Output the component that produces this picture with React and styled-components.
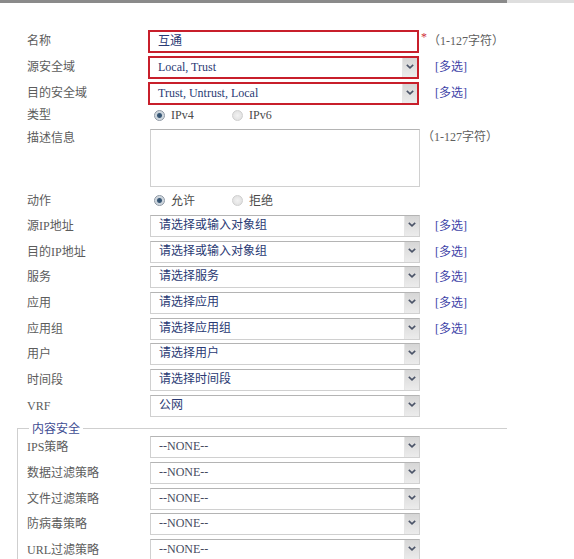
import React from "react";
import styled, { createGlobalStyle, css } from "styled-components";

const Global = createGlobalStyle`
  html, body { margin: 0; padding: 0; background: #fff; }
  body {
    font-family: "Liberation Serif", "Noto Sans CJK SC", serif;
    font-size: 12px;
    color: #5a5a5a;
  }
`;

const Page = styled.div`
  width: 574px;
  height: 559px;
  overflow: hidden;
  background: #fff;
`;

const TopBar = styled.div`
  height: 3px;
  background: linear-gradient(to right, #8a8a8a 507px, #dedede 507px);
`;

const Form = styled.div`
  padding: 25px 0 0 17px;
`;

const Section = styled.div`
  padding-left: 10px;
`;

const Row = styled.div`
  display: grid;
  grid-template-columns: 123px 270px 1fr;
  align-items: ${(p) => (p.$top ? "start" : "center")};
  height: ${(p) => p.$h || "25.7px"};
  box-sizing: border-box;
  padding-top: ${(p) => p.$pt || "0"};
`;

const Label = styled.div`
  color: #5c5c5c;
  line-height: 16px;
  white-space: nowrap;
  ${(p) =>
    p.$top &&
    css`
      padding-top: 1px;
    `}
`;

const Box = styled.div`
  display: flex;
  box-sizing: border-box;
  height: 22px;
  width: 270px;
  border: 1px solid #d0d0d0;
  border-top-color: #b4b4b4;
  background: #fff;
  ${(p) =>
    p.$red &&
    css`
      height: 23px;
      width: 271px;
      margin-left: -2px;
      border: 2px solid #c81f2b;
    `}
`;

const BoxText = styled.div`
  flex: 1;
  padding-left: 8px;
  line-height: 19px;
  color: ${(p) => (p.$muted ? "#454a5e" : "#2a3a74")};
  white-space: nowrap;
  overflow: hidden;
`;

const ArrowBtn = styled.div`
  width: 15px;
  display: flex;
  justify-content: center;
  padding-top: 6px;
  box-sizing: border-box;
  background: linear-gradient(#d6d6d6, #ececec);
  border-left: 1px solid #e6e6e6;
`;

const Extra = styled.div`
  display: flex;
  align-items: flex-start;
  white-space: nowrap;
  line-height: 16px;
`;

const Multi = styled.span`
  margin-left: 15px;
  color: #4044a8;
`;

const Star = styled.span`
  color: #d0303a;
  margin-left: 1px;
  font-size: 12px;
  line-height: 12px;
  margin-top: -2px;
`;

const Hint = styled.span`
  color: #606060;
  margin-left: ${(p) => p.$ml || "0"};
`;

const TextArea = styled.div`
  box-sizing: border-box;
  width: 270px;
  height: 58px;
  border: 1px solid #d0d0d0;
  border-top-color: #b4b4b4;
`;

const RadioGroup = styled.div`
  display: flex;
  align-items: center;
  padding-left: 4px;
`;

const Option = styled.label`
  display: flex;
  align-items: center;
  width: 78px;
  color: #4a4a4a;
  line-height: 14px;
`;

const RadioDot = styled.span`
  box-sizing: border-box;
  width: 11px;
  height: 11px;
  border-radius: 50%;
  margin-right: 6px;
  border: 1px solid ${(p) => (p.$on ? "#8d97a3" : "#cfcfcf")};
  background: ${(p) =>
    p.$on
      ? "radial-gradient(circle, #2f4d6b 0, #3b5a78 2px, #c9d2da 3px, #e6ebef 100%)"
      : "radial-gradient(circle, #f2f2f2 0, #dcdcdc 100%)"};
`;

const Fieldset = styled.fieldset`
  margin: 2px 0 0 0;
  width: 490px;
  box-sizing: border-box;
  padding: 0 0 0 9px;
  border: none;
  border-top: 1px solid #cfcfcf;
  border-left: 1px solid #cfcfcf;
`;

const Legend = styled.legend`
  padding: 0 3px;
  margin-left: 2px;
  margin-bottom: -2px;
  line-height: 16px;
  color: #3e4c92;
`;

function Chevron() {
  return (
    <svg width="8" height="5" viewBox="0 0 8 5">
      <path d="M0.8 0.8 L4 3.8 L7.2 0.8" fill="none" stroke="#4b5468" strokeWidth="1.6" />
    </svg>
  );
}

function Select({ value, red, muted }) {
  return (
    <Box $red={red}>
      <BoxText $muted={muted}>{value}</BoxText>
      <ArrowBtn>
        <Chevron />
      </ArrowBtn>
    </Box>
  );
}

function Radio({ options, checked }) {
  return (
    <RadioGroup>
      {options.map((o, i) => (
        <Option key={o}>
          <RadioDot $on={i === checked} />
          {o}
        </Option>
      ))}
    </RadioGroup>
  );
}

const selectRows = [
  ["源IP地址", "请选择或输入对象组", true],
  ["目的IP地址", "请选择或输入对象组", true],
  ["服务", "请选择服务", true],
  ["应用", "请选择应用", true],
  ["应用组", "请选择应用组", true],
  ["用户", "请选择用户", false],
  ["时间段", "请选择时间段", false],
  ["VRF", "公网", false],
];

const policyRows = ["IPS策略", "数据过滤策略", "文件过滤策略", "防病毒策略", "URL过滤策略"];

export default function App() {
  return (
    <Page>
      <Global />
      <TopBar />
      <Form>
        <Section>
          <Row $h="26px">
            <Label>名称</Label>
            <Box $red>
              <BoxText>互通</BoxText>
            </Box>
            <Extra>
              <Star>*</Star>
              <Hint $ml="1px">（1-127字符）</Hint>
            </Extra>
          </Row>
          <Row $h="26px">
            <Label>源安全域</Label>
            <Select red value="Local, Trust" />
            <Extra>
              <Multi>[多选]</Multi>
            </Extra>
          </Row>
          <Row $h="26px">
            <Label>目的安全域</Label>
            <Select red value="Trust, Untrust, Local" />
            <Extra>
              <Multi>[多选]</Multi>
            </Extra>
          </Row>
          <Row $h="18px">
            <Label>类型</Label>
            <Radio options={["IPv4", "IPv6"]} checked={0} />
          </Row>
          <Row $h="64px" $top $pt="5px">
            <Label $top>描述信息</Label>
            <TextArea />
            <Extra>
              <Hint $ml="2px">（1-127字符）</Hint>
            </Extra>
          </Row>
          <Row $h="25px">
            <Label>动作</Label>
            <Radio options={["允许", "拒绝"]} checked={0} />
          </Row>
          {selectRows.map(([label, value, multi]) => (
            <Row key={label}>
              <Label>{label}</Label>
              <Select value={value} />
              <Extra>{multi && <Multi>[多选]</Multi>}</Extra>
            </Row>
          ))}
        </Section>
        <Fieldset>
          <Legend>内容安全</Legend>
          {policyRows.map((label) => (
            <Row key={label}>
              <Label>{label}</Label>
              <Select value="--NONE--" muted />
              <Extra />
            </Row>
          ))}
        </Fieldset>
      </Form>
    </Page>
  );
}
